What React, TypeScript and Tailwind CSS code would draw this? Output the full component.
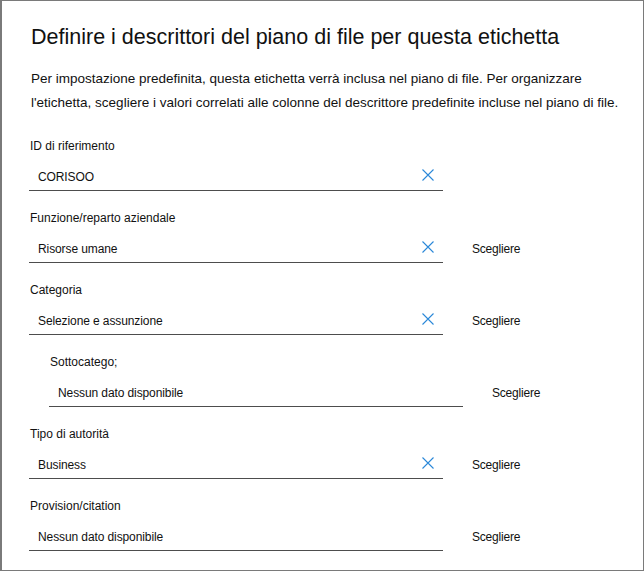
const fields = [
  { label: "ID di riferimento", value: "CORISOO", clear: true, choose: false, sub: false },
  { label: "Funzione/reparto aziendale", value: "Risorse umane", clear: true, choose: true, sub: false },
  { label: "Categoria", value: "Selezione e assunzione", clear: true, choose: true, sub: false },
  { label: "Sottocatego;", value: "Nessun dato disponibile", clear: false, choose: true, sub: true },
  { label: "Tipo di autorità", value: "Business", clear: true, choose: true, sub: false },
  { label: "Provision/citation", value: "Nessun dato disponibile", clear: false, choose: true, sub: false },
];

function ClearIcon() {
  return (
    <svg width="12" height="12" viewBox="0 0 12 12" className="shrink-0">
      <path d="M0.5 0.5 L11.5 11.5 M11.5 0.5 L0.5 11.5" stroke="#2b88d8" strokeWidth="1.1" fill="none" />
    </svg>
  );
}

export default function App() {
  return (
    <div
      className="w-[644px] h-[571px] bg-white border border-l-2 border-[#7a7a7a] text-[#111] overflow-hidden"
      style={{ fontFamily: '"Liberation Sans", Arial, sans-serif' }}
    >
      <div className="pl-[27px] pr-4 pt-[22px]">
        <h1 className="text-[21.5px] leading-[28px] ml-[2px]">
          Definire i descrittori del piano di file per questa etichetta
        </h1>
        <p className="mt-4 max-w-[600px] text-[13.5px] leading-[24px] ml-[2px]">
          Per impostazione predefinita, questa etichetta verrà inclusa nel piano di file. Per organizzare l'etichetta, scegliere i valori correlati alle colonne del descrittore predefinite incluse nel piano di file.
        </p>

        <div className="mt-[23px] flex flex-col">
          {fields.map((f) => (
            <div key={f.label} className={`flex flex-col h-[72px] ${f.sub ? "pl-5" : ""}`}>
              <div className="text-[12px] leading-4 ml-[1px]">{f.label}</div>
              <div className="mt-[6px] flex items-center">
                <div className="w-[414px] h-[31px] flex items-center justify-between pl-[9px] pr-[9px] border-b border-[#4d4d4d]">
                  <span className="text-[12px] tracking-[-0.1px] mt-[4px]">{f.value}</span>
                  {f.clear && <ClearIcon />}
                </div>
                {f.choose && (
                  <span className="ml-[29px] text-[12px] tracking-[-0.2px] mt-[3px]">Scegliere</span>
                )}
              </div>
            </div>
          ))}
        </div>
      </div>
    </div>
  );
}
